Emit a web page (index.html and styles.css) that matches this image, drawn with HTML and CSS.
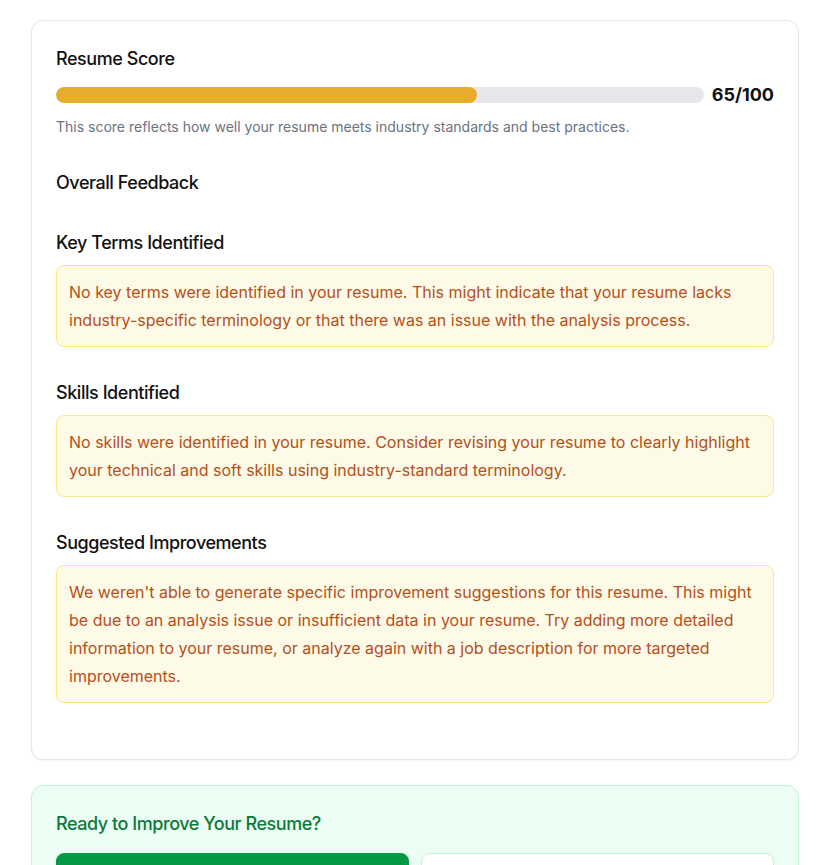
FILE: index.html
```html
<!DOCTYPE html>
<html lang="en">
<head>
<meta charset="utf-8">
<title>Resume Analysis</title>
<link rel="stylesheet" href="styles.css">
</head>
<body>
<main class="page">
  <section class="card">
    <div class="section">
      <h3 class="heading">Resume Score</h3>
      <div class="score-row">
        <div class="track"><div class="fill" style="width:65%"></div></div>
        <span class="score">65/100</span>
      </div>
      <p class="hint">This score reflects how well your resume meets industry standards and best practices.</p>
    </div>
    <div class="section">
      <h3 class="heading">Overall Feedback</h3>
    </div>
    <div class="section">
      <h3 class="heading">Key Terms Identified</h3>
      <div class="notice">No key terms were identified in your resume. This might indicate that your resume lacks industry-specific terminology or that there was an issue with the analysis process.</div>
    </div>
    <div class="section">
      <h3 class="heading">Skills Identified</h3>
      <div class="notice">No skills were identified in your resume. Consider revising your resume to clearly highlight your technical and soft skills using industry-standard terminology.</div>
    </div>
    <div class="section">
      <h3 class="heading">Suggested Improvements</h3>
      <div class="notice">We weren't able to generate specific improvement suggestions for this resume. This might be due to an analysis issue or insufficient data in your resume. Try adding more detailed information to your resume, or analyze again with a job description for more targeted improvements.</div>
    </div>
  </section>

  <section class="cta">
    <h3 class="cta-title">Ready to Improve Your Resume?</h3>
    <div class="cta-actions">
      <button class="btn btn-primary">Optimize My Resume</button>
      <button class="btn btn-secondary">Analyze Another Resume</button>
    </div>
  </section>
</main>
</body>
</html>
```

FILE: styles.css
```css
* { box-sizing: border-box; }

html, body {
  margin: 0;
  padding: 0;
  background: #ffffff;
}

body {
  font-family: Inter, "Noto Sans", "Liberation Sans", sans-serif;
  color: #111827;
}

.page {
  width: 768px;
  margin-left: 31px;
  padding-top: 20px;
}

.card {
  background: #ffffff;
  border: 1px solid #e5e7eb;
  border-radius: 12px;
  box-shadow: 0 1px 2px rgba(0, 0, 0, 0.05);
  padding: 24px 24px 56px;
}

.section + .section {
  margin-top: 32px;
}

.heading {
  margin: 0 0 8px;
  font-size: 18px;
  line-height: 28px;
  font-weight: 500;
  letter-spacing: -0.45px;
  color: #111111;
}

.score-row {
  display: flex;
  align-items: center;
  gap: 8px;
  height: 28px;
}

.track {
  flex: 1;
  height: 16px;
  background: #e5e7eb;
  border-radius: 9999px;
  overflow: hidden;
}

.fill {
  height: 100%;
  background: #e6ac2a;
  border-radius: 9999px;
}

.score {
  font-size: 18px;
  line-height: 28px;
  font-weight: 700;
  color: #111111;
}

.hint {
  margin: 8px 0 0;
  font-size: 14px;
  line-height: 20px;
  color: #6b7280;
}

.notice {
  background: #fefae8;
  border: 1px solid #fde68a;
  border-radius: 8px;
  padding: 12px;
  font-size: 16px;
  line-height: 28px;
  color: #b4501a;
}

.cta {
  margin-top: 25px;
  background: #ecfdf3;
  border: 1px solid #bbf7d0;
  border-radius: 12px;
  padding: 24px 24px 24px;
}

.cta-title {
  margin: 0 0 15px;
  font-size: 18px;
  line-height: 28px;
  font-weight: 500;
  letter-spacing: -0.45px;
  color: #0b7a3a;
}

.cta-actions {
  display: grid;
  grid-template-columns: 1fr 1fr;
  gap: 12px;
}

.btn {
  font-family: inherit;
  font-size: 16px;
  font-weight: 500;
  padding: 20px 16px;
  border-radius: 8px;
  cursor: pointer;
}

.btn-primary {
  background: #059947;
  border: 1px solid #059947;
  color: #ffffff;
}

.btn-secondary {
  background: #ffffff;
  border: 1px solid #bbf7d0;
  color: #15803d;
}
```
